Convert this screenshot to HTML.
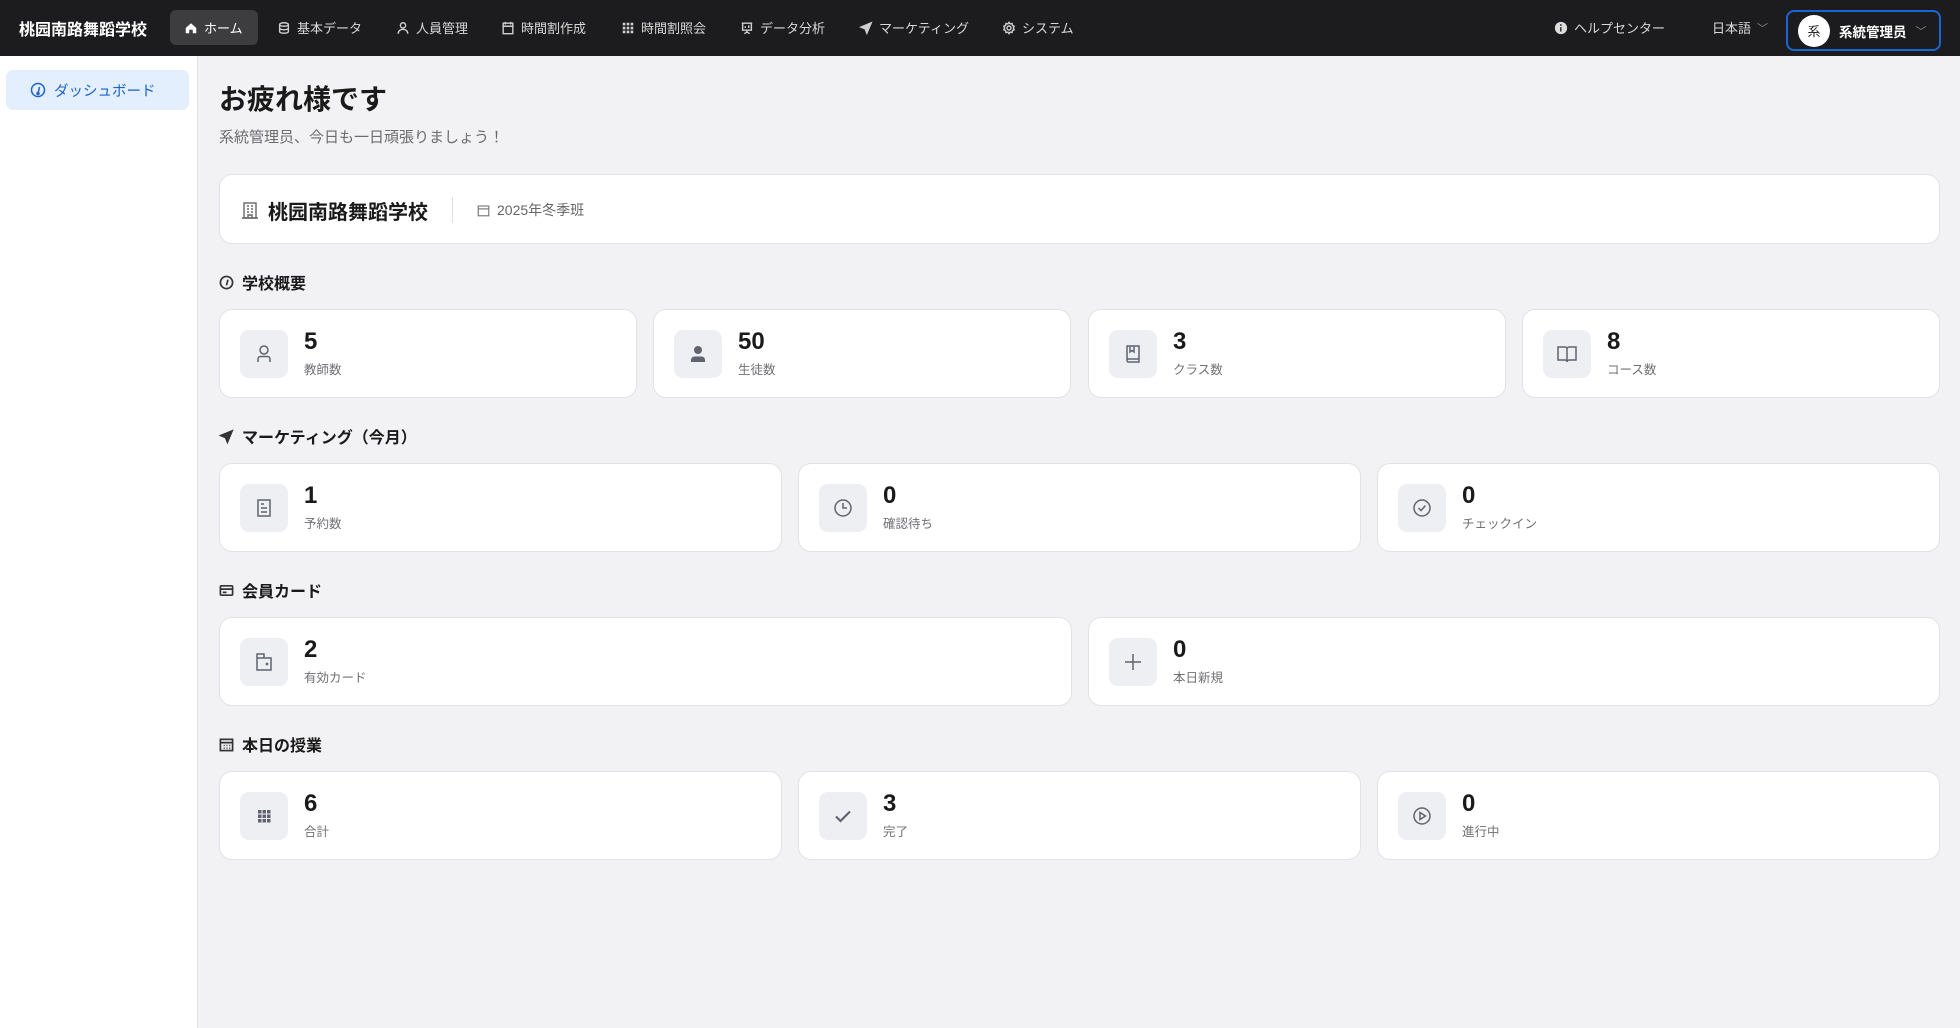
<!DOCTYPE html>
<html><head><meta charset="utf-8"><style>
*{box-sizing:border-box;margin:0;padding:0}
body{width:1960px;height:1028px;overflow:hidden;background:#f2f2f4;font-family:"Liberation Sans","Noto Sans CJK JP",sans-serif;color:#1a1a1a}
.top{position:absolute;left:0;top:0;width:1960px;height:56px;background:#1c1c1e;color:#e6e6e6}
.logo{position:absolute;left:19px;top:16px;font-size:16px;font-weight:bold;color:#fff}
.nav{position:absolute;top:10px;height:35px;display:flex;align-items:center;font-size:13px;color:#d8d8d8;gap:6px}
.nav svg{width:14px;height:14px;stroke:#cfcfcf;fill:none;stroke-width:1.6}
.home{left:170px;width:88px;background:#3d3d40;border-radius:6px;padding-left:14px;color:#fff}
.side{position:absolute;left:0;top:56px;width:198px;height:972px;background:#fff;border-right:1px solid #e3e3e6}
.sitem{position:absolute;left:6px;top:14px;width:183px;height:40px;background:#e3effc;border-radius:7px;color:#1d62c8;font-size:14.5px;display:flex;align-items:center;padding-left:24px;gap:8px}
.main{position:absolute;left:219px;top:0;width:1721px}
h1{position:absolute;top:78px;font-size:28px;font-weight:bold}
.sub{position:absolute;top:126px;font-size:15px;color:#6b6b70}
.card{position:absolute;background:#fff;border:1px solid #e2e2e6;border-radius:13px}
.sec{position:absolute;font-size:16px;font-weight:bold;display:flex;align-items:center;gap:8px}
.sec svg{width:15px;height:15px;stroke:#333;fill:none;stroke-width:1.8}
.ic{position:absolute;left:20px;top:20px;width:48px;height:48px;border-radius:9px;background:#eeeff2;display:flex;align-items:center;justify-content:center}
.ic svg{width:24px;height:24px;stroke:#5f6470;fill:none;stroke-width:1.5}
.num{position:absolute;left:84px;top:18px;font-size:24px;font-weight:bold;color:#1a1a1a}
.lab{position:absolute;left:84px;top:49px;font-size:12.5px;color:#707075}
</style></head><body>
<div class="top">
<div class="logo">桃园南路舞蹈学校</div>
<div class="nav home"><svg viewBox="0 0 16 16" style="fill:#fff;stroke:none"><path d="M2 8L8 2.5 14 8v6H10v-4H6v4H2z"/></svg>ホーム</div>
<div class="nav" style="left:277px"><svg viewBox="0 0 16 16"><ellipse cx="8" cy="4" rx="5" ry="2"/><path d="M3 4v8c0 1.1 2.2 2 5 2s5-.9 5-2V4M3 8c0 1.1 2.2 2 5 2s5-.9 5-2"/></svg>基本データ</div>
<div class="nav" style="left:396px"><svg viewBox="0 0 16 16"><circle cx="8" cy="5" r="3"/><path d="M2.5 14.5c0-3 2.5-5 5.5-5s5.5 2 5.5 5"/></svg>人員管理</div>
<div class="nav" style="left:501px"><svg viewBox="0 0 16 16"><rect x="2.5" y="2.5" width="11" height="12"/><path d="M2.5 6h11M5 1v3M11 1v3"/></svg>時間割作成</div>
<div class="nav" style="left:621px"><svg viewBox="0 0 16 16" style="fill:#cfcfcf;stroke:none"><path d="M2 2h3v3H2zM6.5 2h3v3h-3zM11 2h3v3h-3zM2 6.5h3v3H2zM6.5 6.5h3v3h-3zM11 6.5h3v3h-3zM2 11h3v3H2zM6.5 11h3v3h-3zM11 11h3v3h-3z"/></svg>時間割照会</div>
<div class="nav" style="left:740px"><svg viewBox="0 0 16 16"><path d="M2 2.5h12M3 2.5v8h10v-8M8 10.5v2M5 14.5l3-2 3 2M6 8V6M10 8V5"/></svg>データ分析</div>
<div class="nav" style="left:859px"><svg viewBox="0 0 16 16" style="fill:#cfcfcf"><path d="M14 2L2 7l5 2 2 5z"/></svg>マーケティング</div>
<div class="nav" style="left:1002px"><svg viewBox="0 0 16 16"><circle cx="8" cy="8" r="2.3"/><path d="M8 1.5l1.3 1.8 2.2-.5.4 2.2 2 1-1 2 1 2-2 1-.4 2.2-2.2-.5L8 14.5l-1.3-1.8-2.2.5-.4-2.2-2-1 1-2-1-2 2-1 .4-2.2 2.2.5z"/></svg>システム</div>
<div class="nav" style="left:1554px"><svg viewBox="0 0 16 16" style="fill:#ddd;stroke:none"><circle cx="8" cy="8" r="7"/><path d="M8.5 7v5h-1.5V7zM8.8 4.5a1 1 0 1 1-2 0 1 1 0 0 1 2 0" fill="#1c1c1e"/></svg>ヘルプセンター</div>
<div class="nav" style="left:1712px">日本語 <span style="color:#888;font-size:11px">﹀</span></div>
<div style="position:absolute;left:1786px;top:10px;width:155px;height:41px;border:2px solid #1b66d6;border-radius:8px;display:flex;align-items:center;padding-left:10px;gap:9px;color:#fff;font-size:13.5px;font-weight:bold"><div style="width:32px;height:32px;border-radius:50%;background:#fff;color:#222;font-size:13px;font-weight:normal;display:flex;align-items:center;justify-content:center">系</div>系統管理员 <span style="color:#888;font-size:11px;font-weight:normal">﹀</span></div>
</div>
<div class="side"><div class="sitem"><svg viewBox="0 0 16 16" width="16" height="16" fill="none" stroke="#1d62c8" stroke-width="1.5"><circle cx="8" cy="8" r="6.5"/><path d="M8 11.5L9.5 5"/><circle cx="8" cy="11.5" r="1"/></svg>ダッシュボード</div></div>
<div class="main">
<h1>お疲れ様です</h1>
<div class="sub">系統管理员、今日も一日頑張りましょう！</div>
<div class="card" style="left:0;top:174px;width:1721px;height:70px">
<svg style="position:absolute;left:22px;top:27px" width="16" height="17" viewBox="0 0 16 17" fill="none" stroke="#666" stroke-width="1.4"><rect x="2" y="1" width="12" height="15"/><path d="M5 4h2M9 4h2M5 7h2M9 7h2M5 10h2M9 10h2M6 16v-3h4v3M0 16h16"/></svg>
<div style="position:absolute;left:48px;top:21px;font-size:20px;font-weight:bold">桃园南路舞蹈学校</div>
<div style="position:absolute;left:232px;top:22px;width:1px;height:26px;background:#e0e0e3"></div>
<svg style="position:absolute;left:257px;top:29px" width="13" height="13" viewBox="0 0 16 16" fill="none" stroke="#777" stroke-width="1.4"><rect x="1.5" y="2.5" width="13" height="12"/><path d="M1.5 6h13"/></svg>
<div style="position:absolute;left:277px;top:25px;font-size:14px;color:#666">2025年冬季班</div>
</div>

<div class="sec" style="left:0;top:270px"><svg viewBox="0 0 16 16"><circle cx="8" cy="8" r="6.5"/><path d="M8 11L9.5 5"/></svg>学校概要</div>
<div class="card" style="left:0;top:309px;width:418px;height:89px"><div class="ic"><svg viewBox="0 0 24 24"><circle cx="12" cy="8" r="4"/><path d="M6 20v-3c0-1.5 1-2.5 2.5-2.5h7c1.5 0 2.5 1 2.5 2.5v3"/></svg></div><div class="num">5</div><div class="lab">教師数</div></div>
<div class="card" style="left:434px;top:309px;width:418px;height:89px"><div class="ic"><svg viewBox="0 0 24 24" style="fill:#5f6470;stroke:none"><circle cx="12" cy="8" r="4"/><path d="M5 20v-2c0-2 1.5-3.5 3.5-3.5h7c2 0 3.5 1.5 3.5 3.5v2z"/></svg></div><div class="num">50</div><div class="lab">生徒数</div></div>
<div class="card" style="left:869px;top:309px;width:418px;height:89px"><div class="ic"><svg viewBox="0 0 24 24"><path d="M6 4h12v16H7.5A1.5 1.5 0 0 1 6 18.5zM6 17h12M9 4v6l2-1.5 2 1.5V4"/></svg></div><div class="num">3</div><div class="lab">クラス数</div></div>
<div class="card" style="left:1303px;top:309px;width:418px;height:89px"><div class="ic"><svg viewBox="0 0 24 24"><path d="M3 5h7a2 2 0 0 1 2 2v13a2 2 0 0 0-2-2H3zM21 5h-7a2 2 0 0 0-2 2v13a2 2 0 0 1 2-2h7z"/></svg></div><div class="num">8</div><div class="lab">コース数</div></div>

<div class="sec" style="left:0;top:424px"><svg viewBox="0 0 16 16" style="fill:#333"><path d="M14 2L2 7l5 2 2 5z"/></svg>マーケティング（今月）</div>
<div class="card" style="left:0;top:463px;width:563px;height:89px"><div class="ic"><svg viewBox="0 0 24 24"><rect x="6" y="4" width="12" height="16"/><path d="M9 8h3M9 12h6M9 16h6"/></svg></div><div class="num">1</div><div class="lab">予約数</div></div>
<div class="card" style="left:579px;top:463px;width:563px;height:89px"><div class="ic"><svg viewBox="0 0 24 24"><circle cx="12" cy="12" r="8"/><path d="M12 7v5h4"/></svg></div><div class="num">0</div><div class="lab">確認待ち</div></div>
<div class="card" style="left:1158px;top:463px;width:563px;height:89px"><div class="ic"><svg viewBox="0 0 24 24"><circle cx="12" cy="12" r="8"/><path d="M8.5 12l2.5 2.5 4.5-5"/></svg></div><div class="num">0</div><div class="lab">チェックイン</div></div>

<div class="sec" style="left:0;top:578px"><svg viewBox="0 0 16 16"><rect x="1.5" y="3" width="13" height="10" rx="1"/><path d="M1.5 6.5h13M4 10h4"/></svg>会員カード</div>
<div class="card" style="left:0;top:617px;width:853px;height:89px"><div class="ic"><svg viewBox="0 0 24 24"><path d="M5 4h7v4h7v12H5zM5 8h7"/><circle cx="15" cy="14" r=".6"/></svg></div><div class="num">2</div><div class="lab">有効カード</div></div>
<div class="card" style="left:869px;top:617px;width:852px;height:89px"><div class="ic"><svg viewBox="0 0 24 24"><path d="M12 4v16M4 12h16"/></svg></div><div class="num">0</div><div class="lab">本日新規</div></div>

<div class="sec" style="left:0;top:732px"><svg viewBox="0 0 16 16"><rect x="1.5" y="2.5" width="13" height="12"/><path d="M1.5 6h13M5 9h1M8 9h1M11 9h1M5 12h1M8 12h1M11 12h1"/></svg>本日の授業</div>
<div class="card" style="left:0;top:771px;width:563px;height:89px"><div class="ic"><svg viewBox="0 0 24 24" style="fill:#5f6470;stroke:none"><path d="M6 6h3.5v3.5H6zM10.5 6h3.5v3.5h-3.5zM15 6h3.5v3.5H15zM6 10.5h3.5V14H6zM10.5 10.5h3.5V14h-3.5zM15 10.5h3.5V14H15zM6 15h3.5v3.5H6zM10.5 15h3.5v3.5h-3.5zM15 15h3.5v3.5H15z"/></svg></div><div class="num">6</div><div class="lab">合計</div></div>
<div class="card" style="left:579px;top:771px;width:563px;height:89px"><div class="ic"><svg viewBox="0 0 24 24" style="stroke-width:2.2"><path d="M5 12.5l4.5 4.5L19 7.5"/></svg></div><div class="num">3</div><div class="lab">完了</div></div>
<div class="card" style="left:1158px;top:771px;width:563px;height:89px"><div class="ic"><svg viewBox="0 0 24 24"><circle cx="12" cy="12" r="8"/><path d="M10 8.5v7l5.5-3.5z"/></svg></div><div class="num">0</div><div class="lab">進行中</div></div>
</div>
</body></html>
